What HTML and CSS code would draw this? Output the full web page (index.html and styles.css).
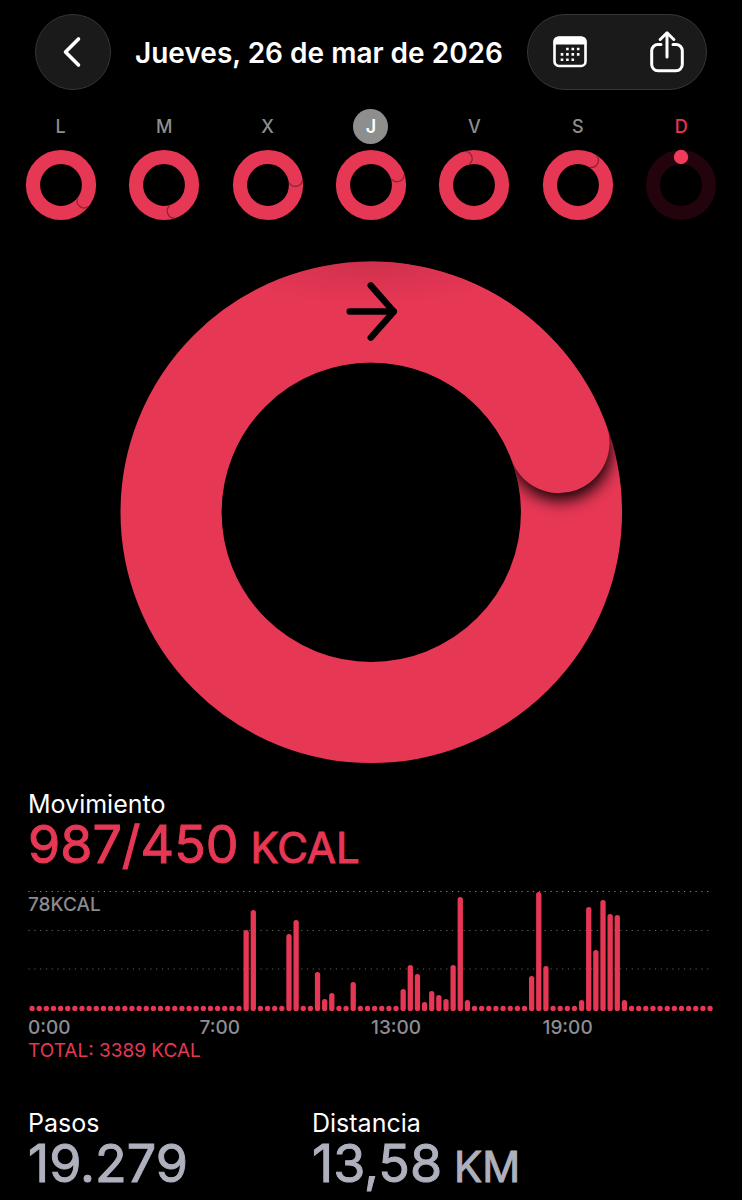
FILE: index.html
```html
<!DOCTYPE html>
<html lang="es">
<head>
<meta charset="utf-8">
<meta name="viewport" content="width=device-width, initial-scale=1">
<title>Actividad</title>
<link rel="stylesheet" href="styles.css">
</head>
<body>
<header class="topbar">
  <button class="glass back" type="button" aria-label="Atrás">
    <svg width="20" height="32" viewBox="0 0 20 32" fill="none" stroke="#fff" stroke-width="3.6" stroke-linecap="round" stroke-linejoin="round"><path d="M16.5 3 3.5 16l13 13"/></svg>
  </button>
  <h1 class="title">Jueves, 26 de mar de 2026</h1>
  <div class="glass actions">
    <button class="action" type="button" aria-label="Calendario">
      <svg width="34" height="32" viewBox="0 0 34 32">
        <rect x="1.5" y="1.5" width="31" height="28.5" rx="4.5" fill="none" stroke="#fff" stroke-width="2.6"/>
        <path d="M.5 8.500V5.500a4.500 4.500 0 0 1 4.500-4.800h24A4.500 4.500 0 0 1 33.500 5.500V8.500z" fill="#fff"/>
        <path d="M14.400 13h0M19.800 13h0M25.200 13h0M9 18.400h0M14.400 18.400h0M19.800 18.400h0M25.200 18.400h0M9 23.800h0M14.400 23.800h0M19.800 23.800h0" stroke="#fff" stroke-width="2.600" stroke-linecap="square"/>
      </svg>
    </button>
    <button class="action" type="button" aria-label="Compartir">
      <svg width="34" height="42" viewBox="0 0 34 42" fill="none" stroke="#fff" stroke-width="3" stroke-linecap="round" stroke-linejoin="round">
        <path d="M11 13.500H8A6.300 6.300 0 0 0 1.700 19.800V33.500A6.300 6.300 0 0 0 8 39.800H26A6.300 6.300 0 0 0 32.300 33.500V19.800A6.300 6.300 0 0 0 26 13.500H23"/>
        <path d="M17 26V2M10.200 8.500 17 1.800l6.800 6.700"/>
      </svg>
    </button>
  </div>
</header>

<nav class="week" id="week" aria-label="Semana"></nav>

<main>
  <svg class="ring" viewBox="0 0 504 504" role="img" aria-label="Anillo de movimiento">
    <defs>
      <clipPath id="ring-area"><path clip-rule="evenodd" d="M252 1.500a250.500 250.500 0 1 1 0 501a250.500 250.500 0 1 1 0-501zM252 102.500a149.500 149.500 0 1 0 0 299a149.500 149.500 0 1 0 0-299z"/></clipPath>
      <filter id="soft" x="-50%" y="-50%" width="200%" height="200%"><feGaussianBlur stdDeviation="8"/></filter>
      <radialGradient id="top-shade"><stop offset="0" stop-color="#5c1020" stop-opacity=".17"/><stop offset="1" stop-color="#5c1020" stop-opacity="0"/></radialGradient>
    </defs>
    <circle cx="252" cy="252" r="200" fill="none" stroke="#e63755" stroke-width="101"/>
    <g clip-path="url(#ring-area)">
      <circle cx="441" cy="189" r="51" fill="#000" opacity=".95" filter="url(#soft)"/>
      <path d="M252 52A200 200 0 0 1 439.500 182.300" fill="none" stroke="#e63755" stroke-width="101" stroke-linecap="round"/>
      <ellipse cx="252" cy="1" rx="150" ry="42" fill="url(#top-shade)"/>
    </g>
    <path d="M230.500 51.500h44M251.500 25.500l23 26-23 26" fill="none" stroke="#000" stroke-width="6.500" stroke-linecap="round" stroke-linejoin="round"/>
  </svg>

  <section class="stat">
    <h2 class="label">Movimiento</h2>
    <p class="value move">987/450<span class="unit"> KCAL</span></p>
  </section>

  <section class="chart" aria-label="Calorías por hora">
    <div class="plot">
      <svg class="bars" id="bars" viewBox="0 0 686 120">
        <path class="grid-top" d="M.5.500H684"/>
        <path class="grid-line" d="M.5 39.500H684M.5 78H684"/>
      </svg>
      <span class="peak">78KCAL</span>
    </div>
    <div class="axis"><span>0:00</span><span>7:00</span><span>13:00</span><span>19:00</span></div>
    <p class="total">TOTAL: 3389 KCAL</p>
  </section>

  <div class="pair">
    <section class="stat">
      <h2 class="label">Pasos</h2>
      <p class="value">19.279</p>
    </section>
    <section class="stat">
      <h2 class="label">Distancia</h2>
      <p class="value">13,58<span class="unit"> KM</span></p>
    </section>
  </div>
</main>
<script src="app.js"></script>
</body>
</html>
```

FILE: styles.css
```css
* { box-sizing: border-box; }

body {
  margin: 0;
  background: #000;
  color: #fff;
  font-family: Inter, "Liberation Sans", sans-serif;
}

h1, h2, p { margin: 0; }

button {
  padding: 0;
  border: 0;
  background: none;
  color: inherit;
  font: inherit;
}

svg { display: block; }

.topbar {
  display: flex;
  align-items: center;
  justify-content: space-between;
  padding: 14px 35px 0;
}

.glass {
  height: 76px;
  border: 1px solid #363636;
  border-radius: 38px;
  background: #1a1a1a;
}

.back {
  display: flex;
  align-items: center;
  justify-content: center;
  width: 76px;
  padding-right: 2px;
}

.title {
  padding-top: 2px;
  font-size: 28px;
  font-weight: 600;
  line-height: 36px;
  white-space: nowrap;
}

.actions {
  display: flex;
  align-items: center;
  justify-content: space-between;
  width: 180px;
  padding: 0 22px 0 25px;
}

.week {
  display: grid;
  grid-template-columns: repeat(7, 1fr);
  padding: 19px 9px 0;
}

.day {
  display: flex;
  flex-direction: column;
  align-items: center;
  gap: 5px;
}

.day-name {
  width: 35px;
  height: 35px;
  border-radius: 50%;
  color: #8e8e8e;
  font-size: 18px;
  font-weight: 500;
  line-height: 35px;
  text-align: center;
}

.selected .day-name { background: #8e8e8e; color: #fff; font-weight: 600; }
.today .day-name { color: #e63755; }

.ring {
  width: 68%;
  margin: 39px auto 0;
}

.stat { min-width: 0; }

.label {
  font-size: 25px;
  font-weight: 400;
  line-height: 30px;
}

.value {
  color: #aeb1bd;
  font-size: 52px;
  font-weight: 400;
  line-height: 52px;
  white-space: nowrap;
  -webkit-text-stroke: 1px currentColor;
  stroke-linejoin: round;
}

.unit { font-size: 42px; }
.move { color: #e63755; }

main > .stat { padding: 24px 28px 0; }

.chart { padding: 17px 28px 0; }

.plot { position: relative; }

.bars { width: 100%; }

.bar { fill: #e63755; }

.grid-top, .grid-line {
  fill: none;
  stroke: #8a8a8a;
  stroke-width: 1.2;
  stroke-dasharray: 1.2 4.6;
}

.grid-line { stroke: #626262; }

.peak {
  position: absolute;
  top: 2px;
  left: 0;
  color: #8a8a8e;
  font-size: 19px;
  font-weight: 500;
  line-height: 23px;
}

.axis {
  display: grid;
  grid-template-columns: repeat(4, 1fr);
  padding-top: 5px;
  color: #8e8e93;
  font-size: 19px;
  font-weight: 500;
  line-height: 23px;
}

.total {
  color: #e63755;
  font-size: 19px;
  line-height: 23px;
}

.pair {
  display: grid;
  grid-template-columns: 284px 1fr;
  padding: 46px 28px 0;
}
```

FILE: app.js
```js
const PINK = "#e63755";

const days = [
  { name: "L", angle: 126 },
  { name: "M", angle: 160 },
  { name: "X", angle: 80 },
  { name: "J", angle: 70, state: "selected" },
  { name: "V", angle: 343 },
  { name: "S", angle: 30 },
  { name: "D", angle: null, state: "today" }
];

function ring(angle) {
  const open = '<svg width="72" height="72" viewBox="0 0 72 72" aria-hidden="true">';
  if (angle === null) {
    return open + '<circle cx="36" cy="36" r="28" fill="none" stroke="#23030c" stroke-width="14"/>' +
      '<circle cx="36" cy="8" r="7.2" fill="#f23b5c"/></svg>';
  }
  return open +
    `<circle cx="36" cy="36" r="28" fill="none" stroke="${PINK}" stroke-width="14.2"/>` +
    `<g transform="rotate(${angle} 36 36)">` +
    '<path d="M37.500 1.300a7.100 7.100 0 0 1 0 13.400" fill="none" stroke="#8e2037" stroke-width="1.2"/></g></svg>';
}

document.getElementById("week").innerHTML = days.map(d =>
  `<button type="button" class="day ${d.state || ""}"><span class="day-name">${d.name}</span>${ring(d.angle)}</button>`
).join("");

// Bar heights by quarter-hour slot; every other slot is an idle dot.
const active = {
  30: 81, 31: 101, 36: 77, 37: 91, 40: 39, 41: 12, 42: 18, 45: 29,
  52: 22, 53: 46, 54: 37, 55: 9, 56: 20, 57: 16, 58: 12, 59: 46, 60: 114, 61: 11,
  70: 35, 71: 119, 72: 45, 77: 11, 78: 104, 79: 61, 80: 111, 81: 97, 82: 96, 83: 11
};

let bars = "";
for (let i = 0; i < 96; i++) {
  const h = active[i] || 5.3;
  const x = (1.4 + i * 7.137).toFixed(2);
  bars += `<rect class="bar" x="${x}" y="${120 - h}" width="5.3" height="${h}" rx="2.6"/>`;
}
document.getElementById("bars").insertAdjacentHTML("beforeend", bars);
```
